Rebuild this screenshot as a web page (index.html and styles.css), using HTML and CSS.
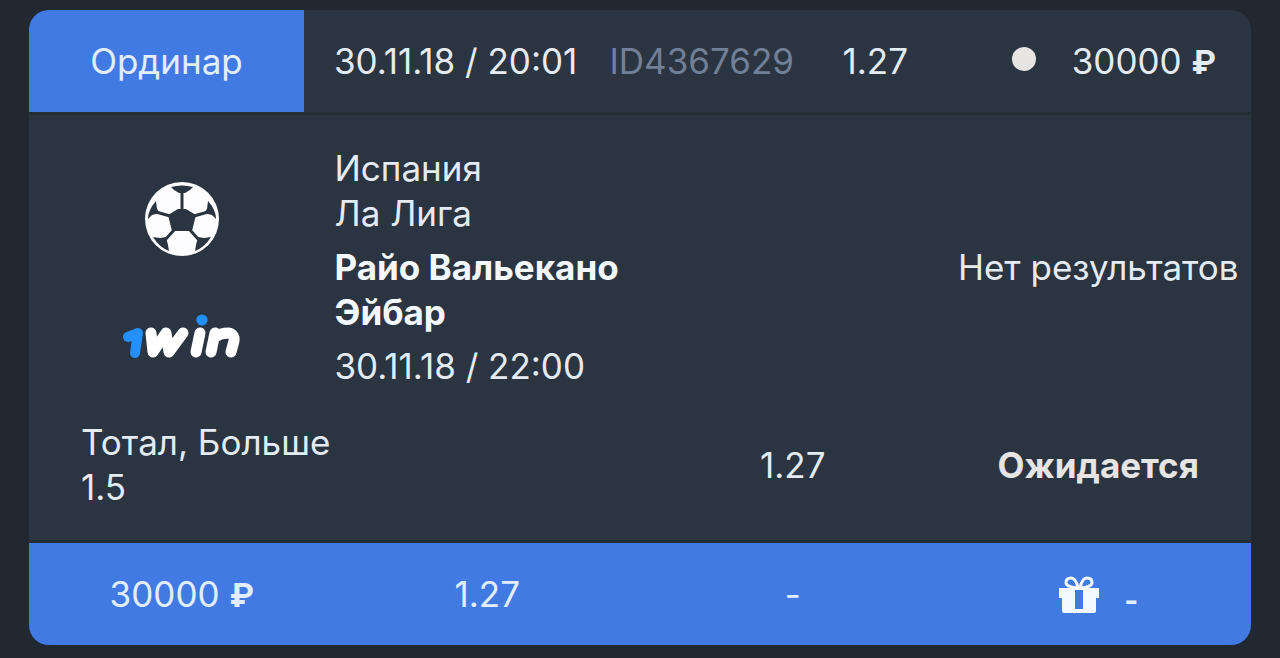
FILE: index.html
```html
<!DOCTYPE html>
<html lang="ru">
<head>
<meta charset="utf-8">
<meta name="viewport" content="width=device-width, initial-scale=1">
<title>Ординар</title>
<link rel="stylesheet" href="styles.css">
</head>
<body>
<article class="bet">
  <header class="bet-head">
    <div class="bet-type">Ординар</div>
    <time class="bet-date">30.11.18 / 20:01</time>
    <span class="bet-id">ID4367629</span>
    <span class="bet-odds">1.27</span>
    <div class="bet-stake"><span class="dot"></span><span>30000 <b class="currency">₽</b></span></div>
  </header>

  <section class="bet-body">
    <div class="event">
      <div class="logos">
        <svg class="ball" viewBox="0 0 74 74" role="img" aria-label="Футбол">
          <circle cx="37" cy="37" r="37" fill="#fdfdff"/>
          <g fill="#2b3441">
            <path d="M33 27H41L51 33 47 49H27L23 33Z"/>
            <path d="M26 5Q37 2 48 5L45 8 40 11H34L29 8Z"/>
            <path d="M63 19Q71 28 71 37L67 33 59 31 62 27Z"/>
            <path d="M11 19Q3 28 3 37L7 33 15 31 12 27Z"/>
            <path d="M66 55Q60 65 50 69L51 63 53 55 59 56Z"/>
            <path d="M8 55Q14 65 24 69L23 63 21 55 15 56Z"/>
          </g>
          <path d="M37 28V8M49 34 63 30M45 48 54 58M29 48 20 58M25 34 11 30" fill="none" stroke="#2b3441" stroke-width="3"/>
        </svg>
        <svg class="brand" viewBox="0 0 118 46" role="img" aria-label="1win">
          <path d="M5 23 15 19 12 39" fill="none" stroke="#2490fb" stroke-width="10" stroke-linecap="round" stroke-linejoin="round"/>
          <circle cx="79" cy="6" r="5.600" fill="#2490fb"/>
          <g fill="none" stroke="#fff" stroke-width="11" stroke-linecap="round" stroke-linejoin="round">
            <path d="M28 19 30 38 43 19 46 38 60 19" stroke-linejoin="round"/>
            <path d="M77 19 73 38"/>
            <path d="M92 19 88 38M92 23Q98 19 105 19 112 20 111 27L108 38"/>
          </g>
        </svg>
      </div>
      <div class="match">
        <div>Испания<br>Ла Лига</div>
        <strong class="teams">Райо Вальекано<br>Эйбар</strong>
        <time>30.11.18 / 22:00</time>
      </div>
      <div class="result">Нет результатов</div>
    </div>
    <div class="pick">
      <div class="pick-name">Тотал, Больше 1.5</div>
      <div class="pick-odds">1.27</div>
      <strong class="status">Ожидается</strong>
    </div>
  </section>

  <footer class="bet-foot">
    <span>30000 <b class="currency">₽</b></span>
    <span>1.27</span>
    <span>-</span>
    <span class="bonus">
      <svg class="gift" viewBox="0 0 42 38" role="img" aria-label="Бонус">
        <g fill="none" stroke="#f3f9ff" stroke-width="3">
          <path d="M20 12Q8 11 8 6.500T13 2Q18 2 20 12Z"/>
          <path d="M22 12Q34 11 34 6.500T29 2Q24 2 22 12Z"/>
        </g>
        <path fill="#f3f9ff" fill-rule="evenodd" d="M1 12H41V22H38V35Q38 37 36 37H6Q4 37 4 35V22H1ZM17 14V33H25V14Z"/>
      </svg>
      <b class="bonus-value">-</b>
    </span>
  </footer>
</article>
</body>
</html>
```
FILE: styles.css
```css
* { box-sizing: border-box; }

body {
  margin: 0;
  padding: 10px 29px 12px;
  background: #222831;
  color: #e4ebf2;
  font: 400 35px/45px Inter, "Open Sans", sans-serif;
}

.bet {
  overflow: hidden;
  border-radius: 20px;
  background: #2b3441;
}

.bet-head {
  display: grid;
  grid-template-columns: 22.5fr 25fr 16fr 11.5fr 25fr;
  align-items: center;
  border-bottom: 3px solid #242c36;
  white-space: nowrap;
}

.bet-type {
  padding: 29px 0 28px;
  background: #427ae3;
  color: #e2eeff;
  text-align: center;
}

.bet-date { padding-left: 30px; }

.bet-id { color: #718096; }

.bet-odds { text-align: center; }

.bet-stake {
  display: flex;
  align-items: center;
  justify-content: flex-end;
  gap: 36px;
  padding-right: 35px;
}

.currency { font-size: 33px; line-height: 1; }

.dot {
  width: 24px;
  height: 24px;
  margin-bottom: 4px;
  border-radius: 50%;
  background: #e6e5e3;
}

.bet-body {
  padding: 31px 0 30px;
  border-bottom: 3px solid #242c36;
}

.event {
  display: grid;
  grid-template-columns: 1fr 2fr 1fr;
  align-items: center;
}

.logos {
  display: flex;
  flex-direction: column;
  align-items: center;
  gap: 58px;
  padding-top: 6px;
}

.ball { width: 74px; height: 74px; }

.brand { width: 118px; height: 46px; }

.match {
  display: flex;
  flex-direction: column;
  gap: 9px;
}

.teams {
  color: #f3f8fd;
  font-weight: 700;
}

.result {
  text-align: center;
  white-space: nowrap;
}

.pick {
  display: grid;
  grid-template-columns: 2fr 1fr 1fr;
  align-items: center;
  padding-top: 31px;
}

.pick-name {
  width: 320px;
  padding-left: 52px;
}

.pick-odds,
.status { text-align: center; }

.status { color: #e6e5e3; }

.bet-foot {
  display: grid;
  grid-template-columns: repeat(4, 1fr);
  align-items: center;
  padding: 29px 0 28px;
  background: #427ae3;
  color: #e2eeff;
  text-align: center;
}

.bonus {
  display: flex;
  align-items: center;
  justify-content: center;
  gap: 24px;
}

.gift { width: 42px; height: 38px; }

.bonus-value {
  padding-top: 10px;
  font-size: 30px;
  line-height: 1;
}
```
